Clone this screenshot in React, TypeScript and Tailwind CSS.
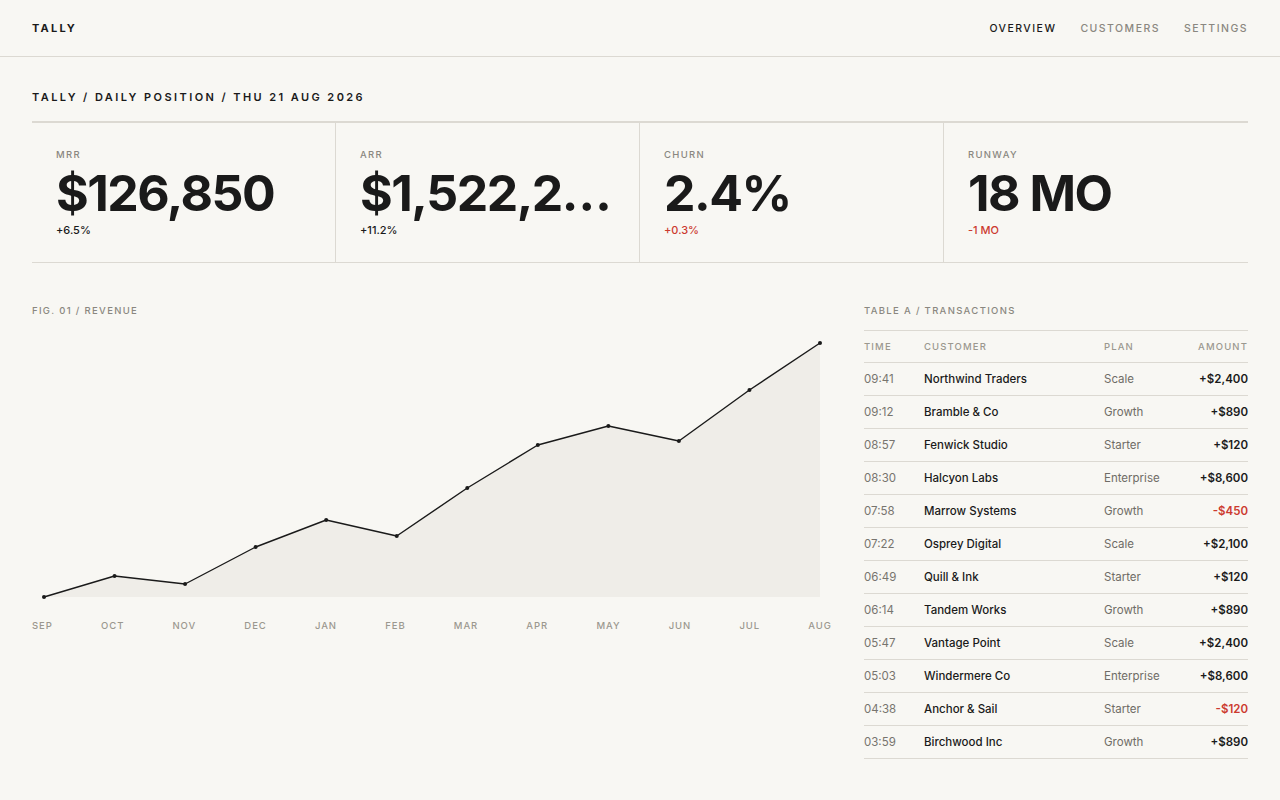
const kpis = [
  { label: "MRR", value: "$126,850", delta: "+6.5%", bad: false },
  { label: "ARR", value: "$1,522,200", delta: "+11.2%", bad: false },
  { label: "CHURN", value: "2.4%", delta: "+0.3%", bad: true },
  { label: "RUNWAY", value: "18 MO", delta: "-1 MO", bad: true },
];

const months = ["SEP", "OCT", "NOV", "DEC", "JAN", "FEB", "MAR", "APR", "MAY", "JUN", "JUL", "AUG"];
// y positions in chart space (0 = top of svg)
const ys = [267, 246, 254, 217, 190, 206, 158, 115, 96, 111, 60, 13];

const rows = [
  { time: "09:41", customer: "Northwind Traders", plan: "Scale", amount: "+$2,400" },
  { time: "09:12", customer: "Bramble & Co", plan: "Growth", amount: "+$890" },
  { time: "08:57", customer: "Fenwick Studio", plan: "Starter", amount: "+$120" },
  { time: "08:30", customer: "Halcyon Labs", plan: "Enterprise", amount: "+$8,600" },
  { time: "07:58", customer: "Marrow Systems", plan: "Growth", amount: "-$450" },
  { time: "07:22", customer: "Osprey Digital", plan: "Scale", amount: "+$2,100" },
  { time: "06:49", customer: "Quill & Ink", plan: "Starter", amount: "+$120" },
  { time: "06:14", customer: "Tandem Works", plan: "Growth", amount: "+$890" },
  { time: "05:47", customer: "Vantage Point", plan: "Scale", amount: "+$2,400" },
  { time: "05:03", customer: "Windermere Co", plan: "Enterprise", amount: "+$8,600" },
  { time: "04:38", customer: "Anchor & Sail", plan: "Starter", amount: "-$120" },
  { time: "03:59", customer: "Birchwood Inc", plan: "Growth", amount: "+$890" },
];

function RevenueChart() {
  const pts = ys.map((y, i) => [12 + i * 70.545, y] as const);
  const line = pts.map(([x, y]) => `${x},${y}`).join(" ");
  const area = `M12,267 L${line.split(" ").join(" L")} L${pts[pts.length - 1][0]},267 Z`;
  return (
    <div>
      <svg width="800" height="270" viewBox="0 0 800 270" className="block">
        <path d={area} fill="#efede8" />
        <polyline points={line} fill="none" stroke="#1a1a1a" strokeWidth="1.4" strokeLinejoin="round" />
        {pts.map(([x, y], i) => (
          <circle key={i} cx={x} cy={y} r="2" fill="#1a1a1a" />
        ))}
      </svg>
      <div className="mt-[20px] flex justify-between text-[9.5px] leading-[12px] font-medium tracking-[0.1em] text-[#9b988f]">
        {months.map((m) => (
          <span key={m}>{m}</span>
        ))}
      </div>
    </div>
  );
}

export default function App() {
  return (
    <div
      className="min-h-[800px] bg-[#f8f7f3] text-[#1a1a1a]"
      style={{ fontFamily: "Inter, 'Liberation Sans', sans-serif" }}
    >
      {/* top bar */}
      <header className="flex h-[57px] items-center justify-between border-b border-[#dcd9d2] px-8">
        <span className="text-[11px] font-bold tracking-[0.2em]">TALLY</span>
        <nav className="flex gap-6 pt-px text-[10.5px] font-medium tracking-[0.14em] text-[#8a8780]">
          <span className="text-[#1a1a1a]">OVERVIEW</span>
          <span>CUSTOMERS</span>
          <span>SETTINGS</span>
        </nav>
      </header>

      <main className="px-8">
        <div className="pt-[33px] text-[11px] leading-[14px] font-semibold tracking-[0.22em]">
          TALLY / DAILY POSITION / THU 21 AUG 2026
        </div>

        {/* kpi strip */}
        <div className="mt-[17px] grid grid-cols-4 border-t-2 border-b border-[#dcd9d2]">
          {kpis.map((k, i) => (
            <div
              key={k.label}
              className={`min-w-0 px-6 pt-[26px] pb-[25px] ${i < 3 ? "border-r border-[#dcd9d2]" : ""}`}
            >
              <div className="text-[9.5px] leading-[12px] font-medium tracking-[0.14em] text-[#8a8780]">
                {k.label}
              </div>
              <div className="mt-[2px] truncate text-[50px] leading-[60px] font-bold tracking-[-0.03em]">
                {k.value}
              </div>
              <div
                className={`text-[11px] leading-[14px] font-medium ${k.bad ? "text-[#cc3a2f]" : "text-[#1a1a1a]"}`}
              >
                {k.delta}
              </div>
            </div>
          ))}
        </div>

        <div className="mt-[42px] flex gap-8">
          <section className="w-[800px]">
            <div className="text-[9.5px] leading-[12px] font-medium tracking-[0.14em] text-[#8a8780]">
              FIG. 01 / REVENUE
            </div>
            <div className="mt-[13px]">
              <RevenueChart />
            </div>
          </section>

          <section className="flex-1">
            <div className="text-[9.5px] leading-[12px] font-medium tracking-[0.14em] text-[#8a8780]">
              TABLE A / TRANSACTIONS
            </div>
            <div className="mt-[13px] border-t border-[#dcd9d2]">
              <div className="grid h-[32px] grid-cols-[60px_180px_1fr_auto] items-center border-b border-[#dcd9d2] pt-px text-[9.5px] font-medium tracking-[0.12em] text-[#9b988f]">
                <span>TIME</span>
                <span>CUSTOMER</span>
                <span>PLAN</span>
                <span className="text-right">AMOUNT</span>
              </div>
              {rows.map((r) => (
                <div
                  key={r.time}
                  className="grid h-[33px] grid-cols-[60px_180px_1fr_auto] items-center border-b border-[#dcd9d2] pt-[2px] text-[11.5px]"
                >
                  <span className="text-[#77746e]">{r.time}</span>
                  <span className="font-medium text-[#1a1a1a]">{r.customer}</span>
                  <span className="text-[#6f6c66]">{r.plan}</span>
                  <span
                    className={`text-right font-semibold ${r.amount.startsWith("-") ? "text-[#cc3a2f]" : "text-[#1a1a1a]"}`}
                  >
                    {r.amount}
                  </span>
                </div>
              ))}
            </div>
          </section>
        </div>
      </main>
    </div>
  );
}
